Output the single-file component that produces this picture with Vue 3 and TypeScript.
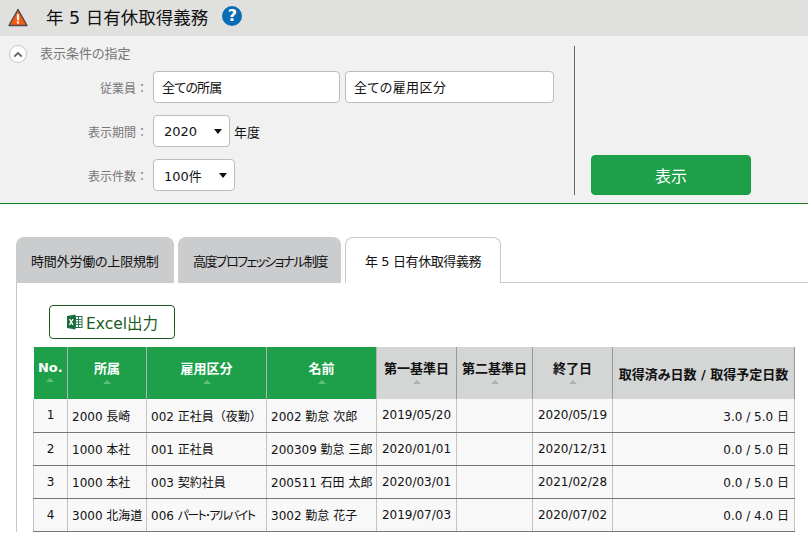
<script setup lang="ts">
interface Row {
  no: number
  dept: string
  kind: string
  kindName: string
  name: string
  first: string
  second: string
  end: string
  days: string
}

const rows: Row[] = [
  { no: 1, dept: '2000 長崎', kind: '002', kindName: '正社員（夜勤）', name: '2002 勤怠 次郎', first: '2019/05/20', second: '', end: '2020/05/19', days: '3.0 / 5.0 日' },
  { no: 2, dept: '1000 本社', kind: '001', kindName: '正社員', name: '200309 勤怠 三郎', first: '2020/01/01', second: '', end: '2020/12/31', days: '0.0 / 5.0 日' },
  { no: 3, dept: '1000 本社', kind: '003', kindName: '契約社員', name: '200511 石田 太郎', first: '2020/03/01', second: '', end: '2021/02/28', days: '0.0 / 5.0 日' },
  { no: 4, dept: '3000 北海道', kind: '006', kindName: 'パート･アルバイト', name: '3002 勤怠 花子', first: '2019/07/03', second: '', end: '2020/07/02', days: '0.0 / 4.0 日' },
]

const tabs = ['時間外労働の上限規制', '高度プロフェッショナル制度', '年 5 日有休取得義務']
const greenHeads = ['No.', '所属', '雇用区分', '名前']
const grayHeads = ['第一基準日', '第二基準日', '終了日']
</script>

<template>
  <div class="page">
    <header class="title-bar">
      <svg class="warn" width="20" height="19" viewBox="0 0 20 19">
        <path d="M10 1.500 L19 17.500 H1 Z" fill="#fb5a0c" stroke="#4a4a52" stroke-width="1.400" stroke-linejoin="round" />
        <rect x="8.900" y="6" width="2.200" height="6.400" rx="0.800" fill="#fff" />
        <rect x="8.900" y="13.400" width="2.200" height="2.200" fill="#fff" />
      </svg>
      <h1>年 5 日有休取得義務</h1>
      <span class="help">?</span>
    </header>

    <section class="panel">
      <div class="conditions">
        <div class="cond-title">
          <span class="toggle">
            <svg width="10" height="7" viewBox="0 0 10 7">
              <path d="M1.200 5.600 L5 2 L8.800 5.600" fill="none" stroke="#666" stroke-width="1.900" />
            </svg>
          </span>
          <span class="cond-text">表示条件の指定</span>
        </div>
        <div class="form-row">
          <label>従業員：</label>
          <div class="input first">全ての所属</div>
          <div class="input second">全ての雇用区分</div>
        </div>
        <div class="form-row">
          <label>表示期間：</label>
          <div class="select year">2020<i class="caret"></i></div>
          <span class="unit">年度</span>
        </div>
        <div class="form-row">
          <label>表示件数：</label>
          <div class="select count">100件<i class="caret"></i></div>
        </div>
      </div>
      <div class="action">
        <button class="show-btn">表示</button>
      </div>
    </section>

    <nav class="tabs">
      <div v-for="(tab, i) in tabs" :key="tab" :class="['tab', { active: i === 2 }]">{{ tab }}</div>
      <div class="tab-rest"></div>
    </nav>

    <main class="content">
      <button class="excel-btn">
        <svg width="17" height="16" viewBox="0 0 16 16">
          <rect x="6" y="2.500" width="9.500" height="11" fill="#fff" stroke="#1e7145" stroke-width="1" />
          <path d="M9 3 V13 M12 3 V13 M6.500 5.500 H15 M6.500 8 H15 M6.500 10.500 H15" stroke="#1e7145" stroke-width="0.900" />
          <path d="M0.500 2 L9 0.500 V15.500 L0.500 14 Z" fill="#1b6e3c" />
          <path d="M3 5.200 L6.500 10.800 M6.500 5.200 L3 10.800" stroke="#fff" stroke-width="1.300" />
        </svg>
        Excel出力
      </button>

      <table class="grid">
        <colgroup>
          <col style="width: 34px" />
          <col style="width: 79px" />
          <col style="width: 120px" />
          <col style="width: 110px" />
          <col style="width: 80px" />
          <col style="width: 76px" />
          <col style="width: 80px" />
          <col style="width: 182px" />
        </colgroup>
        <thead>
          <tr>
            <th v-for="h in greenHeads" :key="h" class="green">{{ h }}<i class="sort"></i></th>
            <th v-for="h in grayHeads" :key="h" class="gray">{{ h }}<i class="sort"></i></th>
            <th class="gray wide">取得済み日数 / 取得予定日数</th>
          </tr>
        </thead>
        <tbody>
          <tr v-for="row in rows" :key="row.no">
            <td class="center">{{ row.no }}</td>
            <td>{{ row.dept }}</td>
            <td>{{ row.kind }} <span :class="{ narrow: row.no === 4 }">{{ row.kindName }}</span></td>
            <td>{{ row.name }}</td>
            <td class="center">{{ row.first }}</td>
            <td class="center">{{ row.second }}</td>
            <td class="center">{{ row.end }}</td>
            <td class="right">{{ row.days }}</td>
          </tr>
        </tbody>
      </table>
    </main>
  </div>
</template>

<style>
body {
  margin: 0;
  background: #fff;
}
</style>

<style scoped>
.page {
  width: 808px;
  height: 540px;
  overflow: hidden;
  font-family: "DejaVu Sans", "Noto Sans CJK JP", sans-serif;
  font-size: 12px;
  font-feature-settings: "palt";
  color: #111;
}

.title-bar {
  height: 36px;
  background: #e0e0de;
  display: flex;
  align-items: center;
  padding-left: 8px;
  box-sizing: border-box;
}

.warn {
  margin-bottom: 2px;
}

h1 {
  margin: 0 0 0 18px;
  font-size: 17.500px;
  font-weight: 400;
  line-height: 20px;
}

.help {
  width: 20px;
  height: 20px;
  margin: 0 0 4px 14px;
  border-radius: 50%;
  background: #0a6cb4;
  color: #fff;
  font-size: 16px;
  font-weight: 700;
  line-height: 20px;
  text-align: center;
}

.panel {
  height: 168px;
  box-sizing: border-box;
  background: #f2f1f1;
  border-bottom: 1px solid #167a22;
  display: flex;
  padding-top: 10px;
}

.conditions {
  height: 149px;
  box-sizing: border-box;
  border-right: 1px solid #666;
  flex: none;
  width: 575px;
}

.cond-title {
  display: flex;
  align-items: center;
  height: 16px;
  padding-left: 9px;
  color: #777;
  font-size: 13px;
}

.cond-text {
  margin-bottom: 3px;
}

.toggle {
  width: 18px;
  height: 18px;
  flex: none;
  box-sizing: border-box;
  margin-right: 13px;
  border: 1px solid #c8c8c8;
  border-radius: 50%;
  background: #fff;
  display: flex;
  align-items: center;
  justify-content: center;
}

.form-row {
  display: flex;
  align-items: center;
  height: 32px;
  margin-top: 12px;
  font-size: 13px;
}

.form-row:nth-child(2) {
  margin-top: 9px;
}

label {
  width: 153px;
  flex: none;
  box-sizing: border-box;
  padding-right: 5px;
  text-align: right;
  font-size: 12px;
  font-feature-settings: normal;
  color: #777;
}

.input,
.select {
  height: 32px;
  box-sizing: border-box;
  border: 1px solid #bdbdbd;
  border-radius: 4px;
  background: #fff;
  display: flex;
  align-items: center;
  flex: none;
}

.input {
  padding: 0 0 2px 8px;
}

.input.first {
  width: 187px;
  letter-spacing: -0.800px;
}

.input.second {
  width: 209px;
  margin-left: 5px;
  letter-spacing: 0.400px;
}

.select {
  padding-left: 10px;
  position: relative;
}

.select.year {
  width: 77px;
}

.select.count {
  width: 82px;
}

.caret {
  position: absolute;
  right: 7px;
  top: 13px;
  border-left: 4px solid transparent;
  border-right: 4px solid transparent;
  border-top: 5px solid #111;
}

.unit {
  margin-left: 4px;
}

.action {
  display: flex;
  align-items: flex-end;
  padding: 0 0 8px 16px;
}

.show-btn {
  width: 160px;
  height: 40px;
  border: 1px solid #16a03e;
  border-radius: 4px;
  background: #1ea04a;
  color: #fff;
  font: inherit;
  font-feature-settings: normal;
  font-size: 16px;
}

.tabs {
  display: flex;
  align-items: flex-end;
  height: 46px;
  margin-top: 33px;
  padding-left: 16px;
  gap: 4px;
}

.tab {
  height: 46px;
  box-sizing: border-box;
  padding: 0 15px;
  display: flex;
  align-items: center;
  background: #cbcccd;
  border-radius: 8px 8px 0 0;
  font-size: 13px;
  white-space: nowrap;
}

.tab:nth-child(1) {
  width: 158px;
  letter-spacing: -0.200px;
}

.tab:nth-child(2) {
  width: 163px;
  letter-spacing: -1.600px;
}

.tab.active {
  width: 156px;
  padding: 0 19px;
  background: #fff;
  border: 1px solid #c8c8c8;
  border-bottom: none;
  letter-spacing: -0.400px;
}

.tab-rest {
  flex: 1;
  margin-left: -4px;
  height: 1px;
  background: #c8c8c8;
}

.content {
  margin-left: 16px;
  border-left: 1px solid #c8c8c8;
  padding: 22px 0 0 16px;
}

.excel-btn {
  width: 126px;
  height: 34px;
  margin-left: 16px;
  display: flex;
  align-items: center;
  justify-content: center;
  gap: 3px;
  background: #fff;
  border: 1px solid #1a5c20;
  border-radius: 4px;
  color: #1a5c20;
  font: inherit;
  font-size: 15.500px;
}

.grid {
  margin-top: 8px;
  width: 761px;
  table-layout: fixed;
  border-collapse: collapse;
  font-size: 12px;
}

th {
  height: 52px;
  box-sizing: border-box;
  padding: 0 0 4px;
  border: 1px solid #b4b4b4;
  border-top: none;
  border-bottom: none;
  font-size: 13px;
  font-weight: 700;
  vertical-align: middle;
  white-space: nowrap;
}

th.green {
  background: #1ea04a;
  color: #fff;
  border-color: #b4b4b4;
}

th.green:first-child {
  border-left: none;
}

th.gray {
  background: #d4d5d5;
  color: #111;
  border-color: #9a9a9a;
}

th.wide {
  padding: 0;
}

.sort {
  display: block;
  width: 0;
  margin: 3px auto 0;
  border-left: 4px solid transparent;
  border-right: 4px solid transparent;
  border-bottom: 4px solid #afb1b1;
}

.green .sort {
  border-bottom-color: #62bd83;
}

td {
  height: 33px;
  box-sizing: border-box;
  padding: 0 4px;
  border: 1px solid #c4c4c4;
  border-top: none;
  border-bottom: 1px solid #777;
  background: #f8f8f8;
  font-feature-settings: normal;
  white-space: nowrap;
  overflow: hidden;
}

.narrow {
  font-feature-settings: "palt";
  letter-spacing: -1.700px;
}

.center {
  text-align: center;
}

.right {
  padding-right: 5px;
  text-align: right;
}
</style>
